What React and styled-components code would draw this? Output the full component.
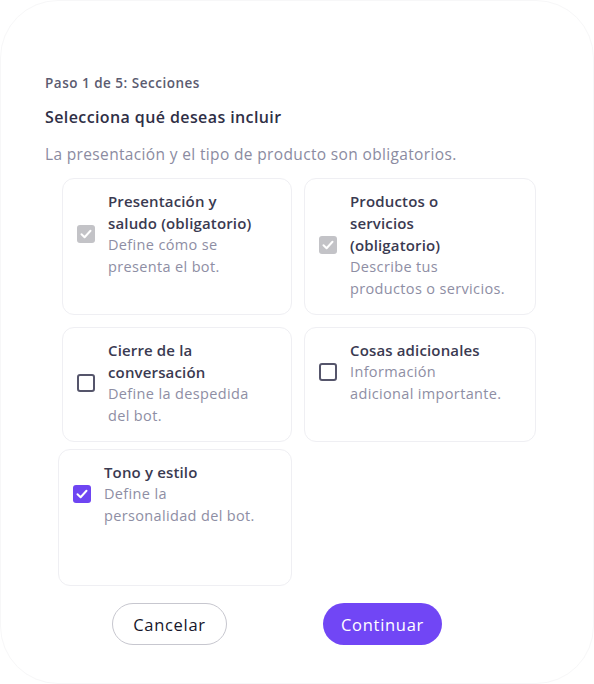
import styled, { createGlobalStyle } from 'styled-components';
import { useState } from 'react';

const GlobalStyle = createGlobalStyle`
    html, body {
        margin: 0;
        padding: 0;
        background: #ffffff;
    }
    body {
        font-family: "Open Sans", "Noto Sans", sans-serif;
    }
    * {
        box-sizing: border-box;
    }
`;

// outer modal frame
const Frame = styled.div`
    width: 594px;
    height: 684px;
    border: 1px solid #f7f7f8;
    border-radius: 58px;
    padding: 73px 0 0 44px;
    background: #ffffff;
`;

const Step = styled.div`
    font-size: 13.5px;
    font-weight: 600;
    letter-spacing: 0.5px;
    color: #5b5b70;
    line-height: 18px;
`;

const Heading = styled.h2`
    margin: 15px 0 0;
    font-size: 16px;
    font-weight: 600;
    letter-spacing: 0.4px;
    color: #2f2f46;
    line-height: 20px;
`;

const Hint = styled.p`
    margin: 16px 0 0;
    font-size: 15.5px;
    font-weight: 400;
    letter-spacing: 0.35px;
    color: #8b8ba1;
    line-height: 22px;
`;

const Grid = styled.div`
    display: grid;
    grid-template-columns: 230px 232px;
    column-gap: 12px;
    row-gap: 12px;
    margin: 13px 0 0 17px;
    width: 474px;
`;

const Card = styled.label`
    display: flex;
    align-items: flex-start;
    border: 1px solid #efeff3;
    border-radius: 12px;
    padding: 11px 14px 14px;
    min-height: ${props => props.$tall ? '137px' : 'auto'};
    margin: ${props => props.$nudge ? '-5px 0 0 -4px' : '0'};
    cursor: pointer;
    background: #ffffff;
`;

const Row = styled.div`
    display: flex;
    align-items: center;
    gap: 13px;
`;

const Box = styled.span`
    flex: none;
    width: 18px;
    height: 18px;
    border-radius: 3px;
    display: flex;
    align-items: center;
    justify-content: center;
    background: ${props => props.$state === 'locked' ? '#c3c3c7' : props.$state === 'on' ? '#6e45f2' : '#ffffff'};
    border: ${props => props.$state === 'off' ? '2px solid #55556b' : 'none'};
`;

const Texts = styled.div`
    display: flex;
    flex-direction: column;
    white-space: pre-line;
`;

const Title = styled.span`
    font-size: 15px;
    font-weight: 600;
    letter-spacing: 0.15px;
    color: #3a3a51;
    line-height: 22px;
`;

const Desc = styled.span`
    font-size: 14.5px;
    font-weight: 400;
    letter-spacing: 0.35px;
    color: #8e8ea4;
    line-height: 22px;
`;

const Actions = styled.div`
    display: flex;
    gap: 96px;
    margin: 17px 0 0 67px;
`;

const Button = styled.button`
    height: 42px;
    width: ${props => props.$primary ? '119px' : '115px'};
    padding: 0;
    border-radius: 21px;
    font-family: "Open Sans", "Noto Sans", sans-serif;
    font-size: 16.5px;
    font-weight: 500;
    letter-spacing: 0.7px;
    cursor: pointer;
    background: ${props => props.$primary ? '#7146f5' : '#ffffff'};
    color: ${props => props.$primary ? '#ffffff' : '#16162a'};
    border: ${props => props.$primary ? 'none' : '1px solid #c7c7cf'};
`;

const Check = () => (
    <svg width="12" height="10" viewBox="0 0 12 10" fill="none">
        <path d="M1.5 5.2 L4.6 8.2 L10.5 1.8" stroke="#ffffff" strokeWidth="2" strokeLinecap="round" strokeLinejoin="round" />
    </svg>
);

const sections = [
    { id: 'intro', title: 'Presentación y\nsaludo (obligatorio)', desc: 'Define cómo se\npresenta el bot.', locked: true },
    { id: 'products', title: 'Productos o\nservicios\n(obligatorio)', desc: 'Describe tus\nproductos o servicios.', locked: true },
    { id: 'closing', title: 'Cierre de la\nconversación', desc: 'Define la despedida\ndel bot.' },
    { id: 'extra', title: 'Cosas adicionales', desc: 'Información\nadicional importante.' },
    { id: 'tone', title: 'Tono y estilo', desc: 'Define la\npersonalidad del bot.', tall: true, nudge: true },
];

export default function App() {
    const [selected, setSelected] = useState({ intro: true, products: true, tone: true });

    // locked sections can't be toggled
    const toggle = (item) => {
        if (item.locked) return;
        setSelected({ ...selected, [item.id]: !selected[item.id] });
    };

    return (
        <>
            <GlobalStyle />
            <Frame>
                <Step>Paso 1 de 5: Secciones</Step>
                <Heading>Selecciona qué deseas incluir</Heading>
                <Hint>La presentación y el tipo de producto son obligatorios.</Hint>
                <Grid>
                    {sections.map(item => {
                        const state = item.locked ? 'locked' : selected[item.id] ? 'on' : 'off';
                        return (
                            <Card key={item.id} $tall={item.tall} $nudge={item.nudge} onClick={() => toggle(item)}>
                                <Row>
                                    <Box $state={state}>{state !== 'off' && <Check />}</Box>
                                    <Texts>
                                        <Title>{item.title}</Title>
                                        <Desc>{item.desc}</Desc>
                                    </Texts>
                                </Row>
                            </Card>
                        );
                    })}
                </Grid>
                <Actions>
                    <Button>Cancelar</Button>
                    <Button $primary>Continuar</Button>
                </Actions>
            </Frame>
        </>
    );
}
